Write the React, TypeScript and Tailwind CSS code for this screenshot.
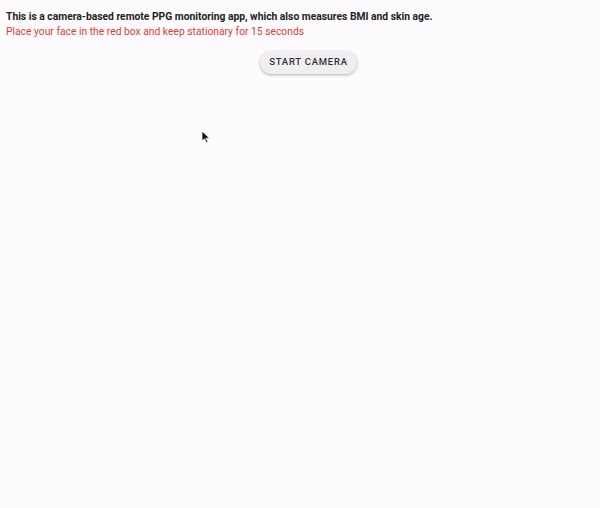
export default function App() {
  return (
    <div
      className="relative min-h-[508px] w-full bg-[#fdfbfd] px-[6px] pt-[9px]"
      style={{ fontFamily: "Roboto, 'Liberation Sans', sans-serif" }}
    >
      <p className="text-[10.3px] font-bold leading-[15px] text-[#222]">
        This is a camera-based remote PPG monitoring app, which also measures BMI and skin age.
      </p>
      <p className="text-[10.3px] leading-[15px] text-[#e53935]">
        Place your face in the red box and keep stationary for 15 seconds
      </p>
      <div className="mt-[12px] flex justify-center pl-[17px]">
        <button className="h-[23px] w-[97px] rounded-full bg-[#f1eef1] text-[9.5px] font-medium tracking-[0.08em] text-[#333] shadow-[0_1px_3px_rgba(0,0,0,0.3)]">
          START CAMERA
        </button>
      </div>

      {/* mouse cursor */}
      <svg className="absolute left-[201px] top-[130px]" width="10" height="14" viewBox="0 0 10 14">
        <path d="M1 1 L1 11 L3.5 8.8 L5.5 13 L7 12.3 L5 8.2 L8.5 8.2 Z" fill="#111" stroke="#fff" strokeWidth="0.8" />
      </svg>
    </div>
  );
}
